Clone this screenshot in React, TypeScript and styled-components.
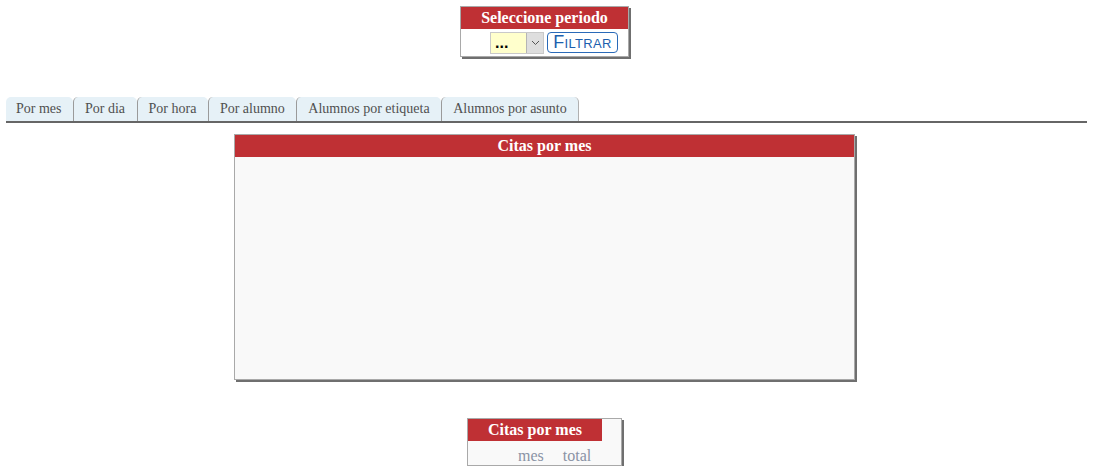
import React from 'react';
import styled, { createGlobalStyle } from 'styled-components';

const GlobalStyle = createGlobalStyle`
  body {
    margin: 0;
    background: #ffffff;
    font-family: "Liberation Serif", "Times New Roman", serif;
  }
`;

const Page = styled.div`
  padding: 6px 9px 0 6px;
`;

const Panel = styled.div<{ $width: number }>`
  width: ${(p) => p.$width}px;
  margin: 0 auto;
  border: 1px solid #a9a9a9;
  box-shadow: 2px 2px 0 #6f6f6f;
  background: #f9f9f9;
  box-sizing: border-box;
  position: relative;
  left: -1px;
`;

const PanelTitle = styled.div<{ $width?: number }>`
  background: #bf3034;
  color: #ffffff;
  font-weight: bold;
  font-size: 16px;
  height: 22px;
  line-height: 21px;
  text-align: center;
  width: ${(p) => (p.$width ? `${p.$width}px` : 'auto')};
`;

const FilterRow = styled.div`
  display: flex;
  justify-content: center;
  align-items: center;
  gap: 3px;
  height: 27px;
  padding-left: 19px;
  background: #ffffff;
`;

const SelectBox = styled.div`
  display: flex;
  width: 54px;
  height: 22px;
  border: 1px solid #c9c9c9;
  box-sizing: border-box;
  background: #ffffcc;
  font-family: "Liberation Sans", Arial, sans-serif;
  font-size: 16px;
  font-weight: bold;
  color: #000000;
`;

const SelectValue = styled.span`
  flex: 1;
  padding-left: 4px;
  line-height: 20px;
`;

const SelectArrow = styled.span`
  width: 16px;
  background: #dedede;
  border-left: 1px solid #b5b5b5;
  display: flex;
  align-items: center;
  justify-content: center;
`;

const FilterButton = styled.button`
  width: 71px;
  height: 21px;
  padding: 0;
  border: 1px solid #2a6ab8;
  border-radius: 4px;
  background: #ffffff;
  color: #1d5fae;
  font-family: "Liberation Sans", Arial, sans-serif;
  font-size: 18px;
  font-variant: small-caps;
  letter-spacing: 0.3px;
  line-height: 19px;
`;

const Tabs = styled.div`
  display: flex;
  margin: 40px -2px 0 0;
  border-bottom: 2px solid #666666;
  height: 24px;
  box-sizing: content-box;
`;

const Tab = styled.div`
  background: #e6f1f7;
  color: #505050;
  font-size: 14px;
  height: 24px;
  line-height: 24px;
  padding: 0 11.5px 0 11px;
  border-left: 1px solid #9a9a9a;
  border-radius: 5px 5px 0 0;

  &:first-child {
    border-left: none;
    padding-left: 10px;
  }
  &:last-child {
    border-right: 1px solid #b0b0b0;
  }
`;

const Spacer = styled.div<{ $h: number }>`
  height: ${(p) => p.$h}px;
`;

const ChartBody = styled.div`
  height: 222px;
  background: #f9f9f9;
`;

const TableRow = styled.div`
  display: flex;
  gap: 19px;
  padding-left: 50px;
  height: 24px;
  line-height: 29px;
  color: #8a93a5;
  font-size: 16px;
`;

const tabs = ['Por mes', 'Por dia', 'Por hora', 'Por alumno', 'Alumnos por etiqueta', 'Alumnos por asunto'];

export default function App() {
  return (
    <Page>
      <GlobalStyle />
      <Panel $width={169}>
        <PanelTitle>Seleccione periodo</PanelTitle>
        <FilterRow>
          <SelectBox>
            <SelectValue>...</SelectValue>
            <SelectArrow>
              <svg width="9" height="6" viewBox="0 0 9 6">
                <path d="M1 1 L4.5 4.5 L8 1" fill="none" stroke="#555" strokeWidth="1" />
              </svg>
            </SelectArrow>
          </SelectBox>
          <FilterButton>Filtrar</FilterButton>
        </FilterRow>
      </Panel>

      <Tabs>
        {tabs.map((t) => (
          <Tab key={t}>{t}</Tab>
        ))}
      </Tabs>

      <Spacer $h={11} />
      <Panel $width={621}>
        <PanelTitle>Citas por mes</PanelTitle>
        <ChartBody />
      </Panel>

      <Spacer $h={38} />
      <Panel $width={155}>
        <PanelTitle $width={134}>Citas por mes</PanelTitle>
        <TableRow>
          <span>mes</span>
          <span>total</span>
        </TableRow>
      </Panel>
    </Page>
  );
}
